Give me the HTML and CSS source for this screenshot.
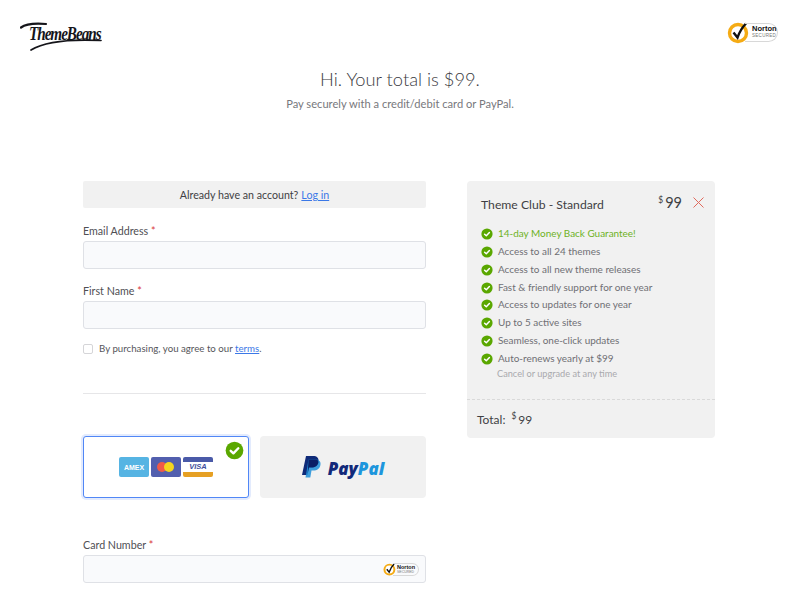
FILE: index.html
```html
<!DOCTYPE html>
<html lang="en">
<head>
<meta charset="utf-8">
<title>Checkout</title>
<link rel="stylesheet" href="styles.css">
</head>
<body>
<svg class="defs" width="0" height="0" aria-hidden="true">
  <symbol id="tick" viewBox="0 0 12 12"><circle cx="6" cy="6" r="5.6" fill="#5aa700"/><path d="M3.6 6.2 5.3 7.8 8.4 4.6" fill="none" stroke="#fff" stroke-width="1.5" stroke-linecap="round" stroke-linejoin="round"/></symbol>
</svg>
<header class="top">
  <div class="logo">
    <span class="logo-text">ThemeBeans</span>
    <svg class="logo-swoosh" width="84" height="32" viewBox="0 0 84 32" aria-hidden="true">
      <path d="M1 7.500C5 4.500 14 3 26 4" fill="none" stroke="#15151a" stroke-width="2.200" stroke-linecap="round"/>
      <path d="M11 30C24 22 50 19 81 20.500" fill="none" stroke="#15151a" stroke-width="1.700" stroke-linecap="round"/>
    </svg>
  </div>
  <div class="norton">
    <svg class="norton-mark" width="24" height="24" viewBox="0 0 24 24" aria-hidden="true">
      <circle cx="11" cy="13" r="8.500" fill="#fff" stroke="#f5ab14" stroke-width="3.400"/>
      <path d="M6.500 12.500 10.500 17.500C12.500 12 15 7.500 19 3.500" fill="none" stroke="#111" stroke-width="2.400"/>
    </svg>
    <span class="norton-badge"><b>Norton</b><i>SECURED</i></span>
  </div>
</header>

<section class="intro">
  <h1>Hi. Your total is $99.</h1>
  <p>Pay securely with a credit/debit card or PayPal.</p>
</section>

<main class="layout">
  <form class="form">
    <div class="account">Already have an account? <a href="#">Log in</a></div>
    <div class="field first">
      <label>Email Address <em>*</em></label>
      <div class="input"></div>
    </div>
    <div class="field">
      <label>First Name <em>*</em></label>
      <div class="input"></div>
    </div>
    <div class="terms"><span class="checkbox"></span><span>By purchasing, you agree to our <a href="#">terms</a>.</span></div>
    <hr class="rule">
    <div class="methods">
      <div class="method selected">
        <span class="amex">AMEX</span>
        <span class="mc"><i class="mc-red"></i><i class="mc-yellow"></i></span>
        <span class="visa"><span>VISA</span></span>
        <svg class="selected-tick" width="19" height="19" aria-hidden="true"><use href="#tick"/></svg>
      </div>
      <div class="method paypal">
        <svg width="19" height="22" viewBox="0 0 19 22" aria-hidden="true">
          <path d="M4 0H11C15 0 17 2 16.500 5.500 16 9.500 13 11.500 9.500 11.500H7L5.500 19H0Z" fill="#0f2a78"/>
          <path d="M6.500 3.500H13C17 3.500 19 5.500 18.500 8.500 18 12.500 15 14.500 11.500 14.500H9.500L8.300 21.500H3.500Z" fill="#1f8fd8" opacity=".85"/>
          <path d="M6.500 3.500H12.500C15 3.500 16.500 4 16.400 6.500 16 9.500 13 11.500 9.500 11.500H7L5.800 17Z" fill="#0b1f66"/>
        </svg>
        <span class="pp-text"><b>Pay</b><b class="pp-light">Pal</b></span>
      </div>
    </div>
    <div class="field card">
      <label>Card Number <em>*</em></label>
      <div class="input input-card">
        <div class="norton small">
          <svg class="norton-mark" width="14" height="14" viewBox="0 0 24 24" aria-hidden="true">
            <circle cx="11" cy="13" r="8.500" fill="#fff" stroke="#f5ab14" stroke-width="3.400"/>
            <path d="M6.500 12.500 10.500 17.500C12.500 12 15 7.500 19 3.500" fill="none" stroke="#111" stroke-width="2.400"/>
          </svg>
          <span class="norton-badge"><b>Norton</b><i>SECURED</i></span>
        </div>
      </div>
    </div>
  </form>

  <aside class="summary">
    <div class="summary-body">
      <div class="plan">
        <span class="plan-name">Theme Club - Standard</span>
        <span class="price"><sup>$</sup>99</span>
        <svg class="remove" width="11" height="11" viewBox="0 0 11 11" aria-hidden="true"><path d="M.5.5 10.500 10.500M10.500.5.5 10.500" stroke="#e0695c" stroke-width="1"/></svg>
      </div>
      <ul class="features">
        <li class="promo"><svg width="12" height="12"><use href="#tick"/></svg>14-day Money Back Guarantee!</li>
        <li><svg width="12" height="12"><use href="#tick"/></svg>Access to all 24 themes</li>
        <li><svg width="12" height="12"><use href="#tick"/></svg>Access to all new theme releases</li>
        <li><svg width="12" height="12"><use href="#tick"/></svg>Fast &amp; friendly support for one year</li>
        <li><svg width="12" height="12"><use href="#tick"/></svg>Access to updates for one year</li>
        <li><svg width="12" height="12"><use href="#tick"/></svg>Up to 5 active sites</li>
        <li><svg width="12" height="12"><use href="#tick"/></svg>Seamless, one-click updates</li>
        <li><svg width="12" height="12"><use href="#tick"/></svg>Auto-renews yearly at $99</li>
      </ul>
      <p class="cancel">Cancel or upgrade at any time</p>
    </div>
    <div class="total"><span>Total:</span><span class="total-price"><sup>$</sup>99</span></div>
  </aside>
</main>
</body>
</html>
```
FILE: styles.css
```css
* { box-sizing: border-box; }
html, body { margin: 0; height: 600px; overflow: hidden; }
body { background: #fff; color: #4b4b50; font-family: Lato, "Liberation Sans", sans-serif; font-size: 11px; }
.defs { display: block; height: 0; }
a { color: #3b78e7; }

.top { display: flex; justify-content: space-between; align-items: flex-start; padding: 20px 22px 0 20px; height: 67px; }
.logo { position: relative; width: 84px; height: 32px; }
.logo-text { position: absolute; left: 9px; top: 4px; font: italic 700 19px/20px "Liberation Serif", serif; letter-spacing: -1.300px; color: #15151a; white-space: nowrap; transform: scaleX(.8); transform-origin: 0 50%; }
.logo-swoosh { position: absolute; left: 0; top: 0; }

.norton { display: flex; align-items: center; }
.norton-badge { display: flex; flex-direction: column; justify-content: center; width: 33px; height: 19px; margin-left: -6px; padding-left: 7px; border: 1px solid #d8d8d8; border-left: 0; border-radius: 0 10px 10px 0; }
.norton-badge b { font: 700 7.500px/8px "Liberation Sans", sans-serif; color: #111; }
.norton-badge i { font: 400 4.500px/6px "Liberation Sans", sans-serif; letter-spacing: .3px; color: #777; }
.norton.small .norton-badge { width: 26px; height: 13px; margin-left: -4px; padding-left: 4px; }
.norton.small .norton-badge b { font-size: 5.500px; line-height: 6px; }
.norton.small .norton-badge i { font-size: 3.500px; line-height: 4px; letter-spacing: 0; }

.intro { text-align: center; height: 114px; }
.intro h1 { margin: 0; font-size: 18.300px; line-height: 24px; font-weight: 300; color: #3a3a3e; }
.intro p { margin: 5px 0 0; font-size: 11.150px; line-height: 16px; color: #77777c; }

.layout { display: grid; grid-template-columns: 343px 248px; column-gap: 41px; margin-left: 83px; align-items: start; }

.account { height: 27px; background: #f1f1f1; display: flex; align-items: center; justify-content: center; gap: 3px; font-size: 10.650px; color: #3f3f44; border-radius: 2px; }
.field label { display: block; font-size: 10.700px; line-height: 13px; color: #4f4f54; }
.field em { color: #d93a3a; font-style: normal; }
.field { margin-top: 16px; }
.field + .field { margin-top: 15px; }
.input { height: 28px; margin-top: 4px; background: #f9fafc; border: 1px solid #dfe1e6; border-radius: 3px; }
.input-card { display: flex; align-items: center; justify-content: flex-end; padding-right: 6px; }

.terms { display: flex; align-items: center; gap: 6px; margin-top: 13px; line-height: 13px; font-size: 9.700px; color: #55555a; }
.checkbox { width: 10px; height: 10px; background: #fff; border: 1px solid #d5d5d8; border-radius: 2px; }
.rule { border: 0; height: 1px; background: #e6e6e8; margin: 38px 0 0; }

.methods { display: grid; grid-template-columns: 166px 166px; column-gap: 11px; margin-top: 42px; }
.method { position: relative; height: 62px; display: flex; align-items: center; justify-content: center; background: #f1f1f1; border-radius: 4px; }
.method.selected { background: #fff; border: 1px solid #5187f6; box-shadow: 0 0 0 2px #e3ebfd; gap: 2px; border-radius: 3px; }
.selected-tick { position: absolute; top: 4px; right: 4px; }
.amex { width: 30px; height: 20px; display: flex; align-items: center; justify-content: center; background: #56b4e3; border-radius: 2px; color: #fff; font: 700 7px/1 "Liberation Sans", sans-serif; }
.mc { position: relative; width: 30px; height: 20px; background: #525fae; border-radius: 2px; }
.mc-red, .mc-yellow { position: absolute; top: 5px; width: 10px; height: 10px; border-radius: 50%; }
.mc-red { left: 6px; background: #ef5a48; }
.mc-yellow { left: 13px; background: #f3d51e; }
.visa { width: 30px; height: 20px; display: flex; align-items: center; justify-content: center; background: #fff; border-top: 5px solid #4a5aa8; border-bottom: 5px solid #e6a023; border-radius: 2px; color: #3f4f9c; font: italic 700 7.500px/1 "Liberation Sans", sans-serif; }

.paypal { gap: 7px; }
.pp-text { margin-top: 2px; font: italic 700 17px/1 "Open Sans", sans-serif; color: #12297a; }
.pp-light { color: #1d96dd; }

.field.card { margin-top: 40px; }

.summary { background: #f1f1f1; border-radius: 4px; height: 257px; display: flex; flex-direction: column; justify-content: space-between; }
.summary-body { padding: 10px 11px 0 14px; }
.plan { display: flex; align-items: center; height: 22px; color: #3f3f44; }
.plan-name { font-size: 12.200px; margin-top: 5px; flex: 1; }
.price { font-size: 14.500px; font-weight: 400; margin-right: 11px; }
.price sup, .total-price sup { font-size: 8.500px; vertical-align: 5px; line-height: 0; margin-right: 2px; }
.features { list-style: none; margin: 11px 0 0; padding: 0; }
.features li { display: flex; align-items: center; gap: 5px; height: 17.860px; font-size: 9.950px; color: #6f6f74; }
.features li svg { margin-top: 2px; }
.features li.promo { color: #6eb11f; }
.cancel { margin: 1px 0 0 16px; font-size: 9.200px; line-height: 12px; color: #a9a9ad; }
.total { height: 39px; border-top: 1px dashed #d9d9d9; display: flex; align-items: center; gap: 6px; padding-left: 10px; font-size: 12px; color: #3f3f44; }
```
